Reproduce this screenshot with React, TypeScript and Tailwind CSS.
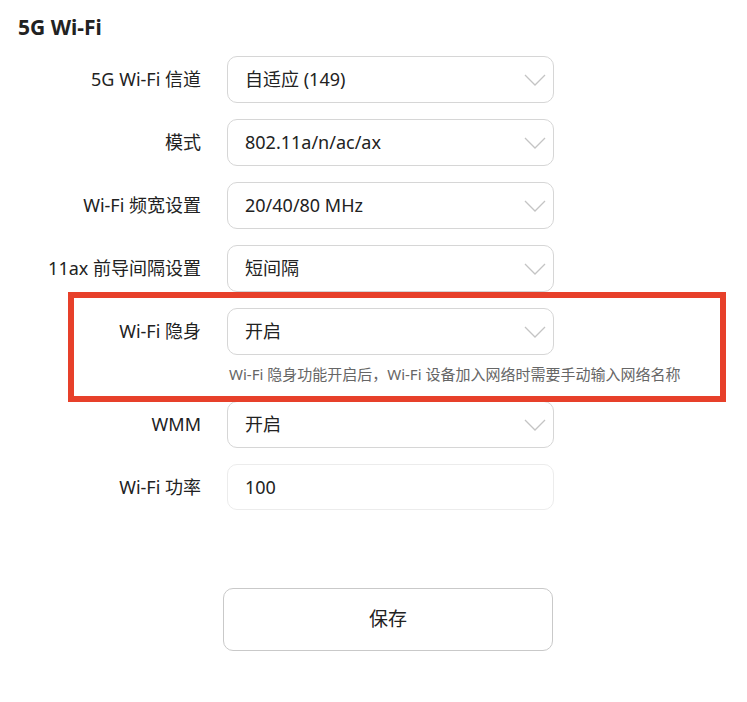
import React from "react";

const FONT = { fontFamily: '"Noto Sans", "Noto Sans CJK SC", sans-serif' };

function Chevron() {
  return (
    <svg width="22" height="12" viewBox="0 0 22 12" fill="none" className="shrink-0">
      <path d="M1 1l10 10L21 1" stroke="#c4c4c4" strokeWidth="1.3" />
    </svg>
  );
}

function SelectBox({ value }: { value: string }) {
  return (
    <div className="w-[327px] h-[47px] rounded-[10px] border border-[#d6d6d6] bg-white flex items-center justify-between pl-[17px] pr-[7px] text-[18px] text-[#222]">
      <span>{value}</span>
      <Chevron />
    </div>
  );
}

function Row({ label, children }: { label: string; children: React.ReactNode }) {
  return (
    <div className="flex items-center">
      <div className="w-[202px] text-right text-[18px] text-[#222] pr-[1px]">{label}</div>
      <div className="ml-[25px]">{children}</div>
    </div>
  );
}

export default function App() {
  const rows = [
    { label: "5G Wi-Fi 信道", value: "自适应 (149)" },
    { label: "模式", value: "802.11a/n/ac/ax" },
    { label: "Wi-Fi 频宽设置", value: "20/40/80 MHz" },
    { label: "11ax 前导间隔设置", value: "短间隔" },
  ];

  return (
    <div className="w-[747px] h-[702px] bg-white pt-[15px]" style={FONT}>
      <h2 className="pl-[18px] text-[21px] leading-[24px] font-bold text-[#222]">5G Wi-Fi</h2>

      <div className="mt-[17px] flex flex-col gap-4">
        {rows.map((r) => (
          <Row key={r.label} label={r.label}>
            <SelectBox value={r.value} />
          </Row>
        ))}

        <div className="relative">
          <Row label="Wi-Fi 隐身">
            <SelectBox value="开启" />
          </Row>
          <div className="ml-[229px] mt-[8px] h-[22px] leading-[22px] text-[15px] text-[#666]">
            Wi-Fi 隐身功能开启后，Wi-Fi 设备加入网络时需要手动输入网络名称
          </div>
          {/* annotation frame */}
          <div className="absolute left-[68px] top-[-16px] bottom-[-17px] w-[658px] border-[6px] border-[#e7402a] pointer-events-none" />
        </div>

        <Row label="WMM">
          <SelectBox value="开启" />
        </Row>

        <Row label="Wi-Fi 功率">
          <div className="w-[327px] h-[46px] rounded-[10px] border border-[#ececec] bg-white flex items-center pl-[17px] text-[18px] text-[#222]">
            100
          </div>
        </Row>
      </div>

      <div className="mt-[78px] pl-[223px]">
        <button className="w-[330px] h-[63px] rounded-[10px] border border-[#c9c9c9] bg-white text-[19px] text-[#222]">
          保存
        </button>
      </div>
    </div>
  );
}
